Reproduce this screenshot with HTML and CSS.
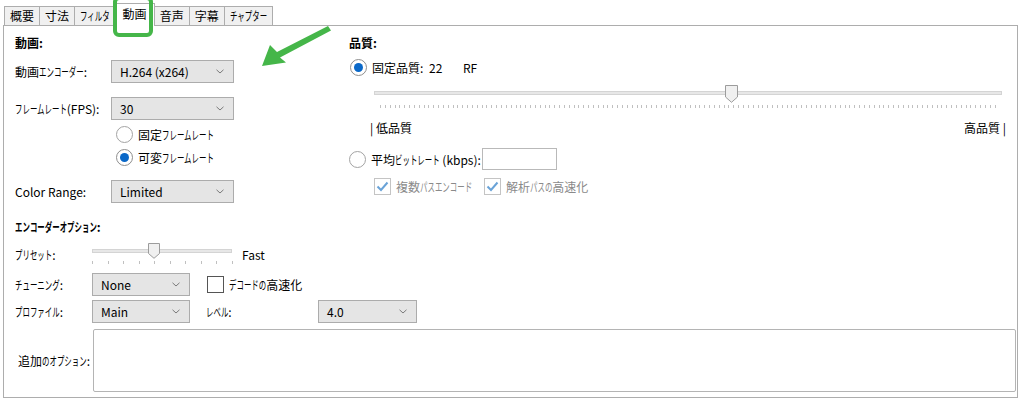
FILE: index.html
```html
<!DOCTYPE html>
<html lang="ja">
<head>
<meta charset="utf-8">
<link rel="stylesheet" href="styles.css">
</head>
<body>
<div class="window">
  <div class="tabs">
    <div class="tab">概要</div>
    <div class="tab">寸法</div>
    <div class="tab"><span class="k n4">フィルタ</span></div>
    <div class="tab active">動画</div>
    <div class="tab">音声</div>
    <div class="tab">字幕</div>
    <div class="tab"><span class="k n5">チャプター</span></div>
  </div>
  <div class="panel">
    <div class="top">
      <section class="col-video">
        <h3 class="heading">動画:</h3>
        <div class="field f1"><span class="lbl">動画<span class="k n6">エンコーダー</span>:</span><div class="select w123"><span>H.264 (x264)</span><svg class="chev" width="8" height="5" viewBox="0 0 8 5"><path d="M0.5 0.8 L4 4 L7.5 0.8" fill="none" stroke="#7a7a7a" stroke-width="1"/></svg></div></div>
        <div class="field f2"><span class="lbl"><span class="k n7">フレームレート</span>(FPS):</span><div class="select w123"><span>30</span><svg class="chev" width="8" height="5" viewBox="0 0 8 5"><path d="M0.5 0.8 L4 4 L7.5 0.8" fill="none" stroke="#7a7a7a" stroke-width="1"/></svg></div></div>
        <div class="opt fr1"><span class="radio"></span><span class="opt-text">固定<span class="k n7">フレームレート</span></span></div>
        <div class="opt fr2"><span class="radio checked"></span><span class="opt-text">可変<span class="k n7">フレームレート</span></span></div>
        <div class="field f2"><span class="lbl">Color Range:</span><div class="select w123"><span>Limited</span><svg class="chev" width="8" height="5" viewBox="0 0 8 5"><path d="M0.5 0.8 L4 4 L7.5 0.8" fill="none" stroke="#7a7a7a" stroke-width="1"/></svg></div></div>
      </section>
      <section class="col-quality">
        <h3 class="heading">品質:</h3>
        <div class="opt q1"><span class="radio checked"></span><span class="opt-text rf-lbl">固定品質:</span><span class="rf-val">22</span><span class="rf-unit">RF</span></div>
        <div class="slider qslider">
          <div class="track"></div>
          <svg class="thumb qthumb" width="13" height="18" viewBox="0 0 13 18"><path d="M0.5 0.5 H12.5 V12 L6.5 17.3 L0.5 12 Z" fill="#f0f0f0" stroke="#9c9c9c"/></svg>
          <div class="ticks qticks"></div>
        </div>
        <div class="q-labels"><span>| 低品質</span><span>高品質 |</span></div>
        <div class="opt q2"><span class="radio"></span><span class="opt-text br-lbl">平均<span class="k n6">ビットレート</span> (kbps):</span><span class="textbox"></span></div>
        <div class="opt q3">
          <span class="check disabled"><svg width="13" height="11" viewBox="0 0 13 11"><path d="M1.5 5.5 L5 9 L11.5 1.5" fill="none" stroke="#6aa3d8" stroke-width="2"/></svg></span><span class="opt-text dim mp-lbl">複数<span class="k n7">パスエンコード</span></span>
          <span class="check disabled"><svg width="13" height="11" viewBox="0 0 13 11"><path d="M1.5 5.5 L5 9 L11.5 1.5" fill="none" stroke="#6aa3d8" stroke-width="2"/></svg></span><span class="opt-text dim">解析<span class="k n3">パスの</span>高速化</span>
        </div>
      </section>
    </div>
    <section class="enc">
      <h3 class="heading enc-head"><span class="k n11">エンコーダーオプション</span>:</h3>
      <div class="field preset"><span class="lbl2"><span class="k n5">プリセット</span>:</span>
        <div class="slider pslider">
          <div class="track"></div>
          <svg class="thumb pthumb" width="12" height="16" viewBox="0 0 12 16"><path d="M0.5 0.5 H11.5 V10.5 L6 15.3 L0.5 10.5 Z" fill="#f0f0f0" stroke="#9c9c9c"/></svg>
          <div class="ticks pticks"></div>
        </div>
        <span class="fast">Fast</span>
      </div>
      <div class="field tune"><span class="lbl2"><span class="k n6">チューニング</span>:</span><div class="select w98"><span>None</span><svg class="chev" width="8" height="5" viewBox="0 0 8 5"><path d="M0.5 0.8 L4 4 L7.5 0.8" fill="none" stroke="#7a7a7a" stroke-width="1"/></svg></div>
        <span class="check cb-dec"></span><span class="opt-text"><span class="k n5">デコードの</span>高速化</span>
      </div>
      <div class="field profile"><span class="lbl2"><span class="k n6">プロファイル</span>:</span><div class="select w98"><span>Main</span><svg class="chev" width="8" height="5" viewBox="0 0 8 5"><path d="M0.5 0.8 L4 4 L7.5 0.8" fill="none" stroke="#7a7a7a" stroke-width="1"/></svg></div>
        <span class="lvl"><span class="k n3">レベル</span>:</span><div class="select w99"><span>4.0</span><svg class="chev" width="8" height="5" viewBox="0 0 8 5"><path d="M0.5 0.8 L4 4 L7.5 0.8" fill="none" stroke="#7a7a7a" stroke-width="1"/></svg></div>
      </div>
      <div class="extra"><span class="lbl-extra">追加<span class="k n6">のオプション</span>:</span><div class="textarea"></div></div>
    </section>
  </div>
  <div class="tab-highlight"></div>
  <svg class="arrow" width="1019" height="408" viewBox="0 0 1019 408">
    <polygon points="262,66 270,45 277,52 328,26 331,30.5 280,57.5 286,62.5" fill="#45b649"/>
  </svg>
</div>
</body>
</html>
```

FILE: styles.css
```css
* { box-sizing: border-box; }
html, body { margin: 0; background: #fff; }
body {
  font-family: "Noto Sans CJK JP", "Liberation Sans", sans-serif;
  font-size: 12px;
  color: #000;
  font-feature-settings: "palt";
}
/* narrow kana runs (Meiryo UI-like): each kana is 12px wide without palt, condensed to ~7.4px */
.k {
  display: inline-block;
  font-feature-settings: normal;
  transform: scaleX(0.62);
  transform-origin: 0 50%;
}
.n3 { margin-right: -13.7px; }
.n4 { margin-right: -18.2px; }
.n5 { margin-right: -22.8px; }
.n6 { margin-right: -27.4px; }
.n7 { margin-right: -31.9px; }
.n11 { margin-right: -50.2px; }

.window { position: relative; width: 1019px; height: 408px; overflow: hidden; }

/* tabs */
.tabs { display: flex; align-items: flex-end; height: 25px; padding: 6px 0 0 4px; }
.tab {
  height: 19px; line-height: 17px; padding: 0 5px;
  border: 1px solid #adadad; border-bottom: none;
  margin-right: -1px; background: #f0f0f0; white-space: nowrap;
}
.tab.active {
  position: relative; z-index: 1;
  height: 23px; margin-bottom: -1px; background: #fff;
  line-height: 20px; padding: 0 7px;
}

/* panel */
.panel {
  margin-left: 3px; width: 1015px; height: 373px;
  border: 1px solid #adadad; padding: 9px 1px 0 11px;
}
.top { display: flex; height: 168px; }
.col-video { width: 334px; }
.col-quality { flex: 1; padding-right: 10px; }
.heading { margin: 0; font-size: 12px; font-weight: 700; line-height: 16px; }

.field { display: flex; align-items: center; height: 23px; }
.lbl { width: 96px; flex: none; white-space: nowrap; }
.lbl2 { width: 77px; flex: none; white-space: nowrap; }
.f1 { margin-top: 9px; }
.f2 { margin-top: 14px; }

.select {
  display: flex; align-items: center; justify-content: space-between; flex: none;
  height: 23px; padding: 0 9px 0 8px;
  background: #e5e5e5; border: 1px solid #acacac;
}
.w123 { width: 123px; }
.w98 { width: 98px; }
.w99 { width: 99px; }
.chev { display: block; }

/* options */
.opt { display: flex; align-items: center; height: 17px; }
.fr1 { margin-top: 6px; padding-left: 101px; }
.fr2 { margin-top: 6px; padding-left: 101px; }
.opt-text { margin-left: 5px; white-space: nowrap; }
.dim { color: #8a8a8a; }
.radio {
  flex: none; width: 17px; height: 17px; border-radius: 50%;
  border: 1px solid #a3a3a3; background: #fff; position: relative;
}
.radio.checked { border-color: #8e8e8e; }
.radio.checked::after {
  content: ""; position: absolute; left: 3px; top: 3px;
  width: 9px; height: 9px; border-radius: 50%; background: #0a68c8;
}
.check {
  flex: none; width: 17px; height: 17px; border: 1px solid #555;
  background: #fff; display: flex; align-items: center; justify-content: center;
}
.check.disabled { border-color: #c4c4c4; }
.check svg { display: block; }

/* quality */
.q1 { margin-top: 8px; padding-left: 1px; }
.rf-lbl { width: 52px; }
.rf-val { margin-left: 5px; width: 34px; }
.slider { position: relative; }
.track {
  position: absolute; left: 0; right: 0; height: 4px;
  background: #e7e7e7; border: 1px solid #d4d4d4;
}
.thumb { position: absolute; display: block; }
.ticks { position: absolute; height: 3px; }
.qslider { margin: 8px 0 0 25px; width: 628px; height: 26px; }
.qslider .track { top: 7px; }
.qthumb { left: 351px; top: 1px; }
.qticks {
  top: 21px; left: 6px; right: 6px;
  background: repeating-linear-gradient(to right, #c0c0c0 0 1px, transparent 1px 4.84px);
}
.q-labels {
  display: flex; justify-content: space-between;
  margin: 10px 0 0 21px; line-height: 16px;
}
.q2 { margin-top: 12px; height: 22px; }
.br-lbl { width: 106px; }
.textbox {
  display: block; flex: none; width: 75px; height: 22px; margin-left: 5px;
  border: 1px solid #b9b9b9; background: #fff;
}
.q3 { margin-top: 8px; padding-left: 25px; }
.mp-lbl { width: 88px; }

/* encoder options */
.enc-head { margin-top: 16px; }
.preset { margin-top: 7px; height: 24px; }
.pslider { width: 140px; height: 24px; flex: none; }
.pslider .track { top: 7px; }
.pthumb { left: 56px; top: 1px; }
.pticks {
  top: 19px; left: 0; width: 141px;
  background: repeating-linear-gradient(to right, #c0c0c0 0 1px, transparent 1px 15.55px);
}
.fast { margin-left: 10px; }
.tune { margin-top: 7px; }
.cb-dec { margin-left: 17px; }
.profile { margin-top: 4px; }
.lvl { margin-left: 16px; width: 112px; flex: none; }
.extra { display: flex; align-items: center; margin-top: 6px; height: 63px; }
.lbl-extra {
  width: 78px; flex: none; display: flex; justify-content: flex-end;
  white-space: nowrap; padding-right: 3px;
}
.textarea {
  flex: 1; height: 63px; border: 1px solid #b4b4b4; border-radius: 2px; background: #fff;
}

/* annotation overlays */
.tab-highlight {
  position: absolute; left: 113px; top: -4px; width: 40px; height: 41px;
  border: 4px solid #45b649; border-radius: 6px; z-index: 2;
}
.arrow { position: absolute; left: 0; top: 0; z-index: 3; pointer-events: none; }
```
